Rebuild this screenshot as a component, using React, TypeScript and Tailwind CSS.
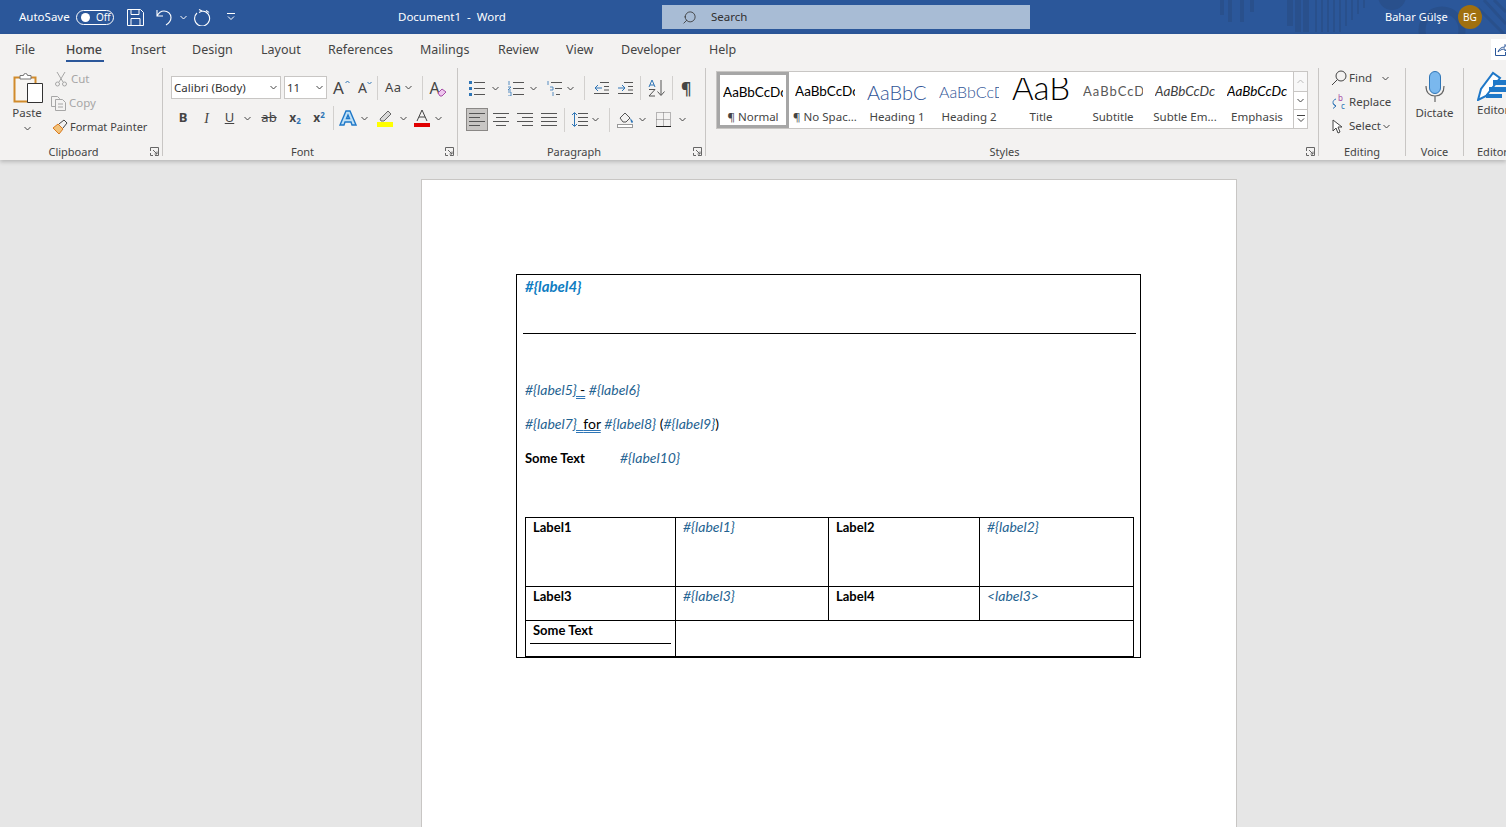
import React from "react";
import { Search } from "lucide-react";

const Chev = ({ className = "" }: { className?: string }) => (
  <svg width="7" height="5" viewBox="0 0 7 5" fill="none" stroke="#444" strokeWidth="1" className={className}>
    <path d="M.5 1l3 3 3-3" />
  </svg>
);

const Launcher = () => (
  <svg width="9" height="9" viewBox="0 0 9 9" fill="none" stroke="#666" strokeWidth="1" className="absolute right-[3px] bottom-0">
    <path d="M.5 4V.5h8v8H5M3 3l4 4M4.5 7H7V4.5M.5 6v2.5H3" />
  </svg>
);

const VSep = ({ className = "" }: { className?: string }) => <div className={`w-px h-[24px] bg-[#d2d0ce] ${className}`} />;

interface GroupProps {
  label: string;
  className: string;
  launcher?: boolean;
  children: React.ReactNode;
}

const Group = ({ label, className, launcher, children }: GroupProps) => (
  <div className={`relative shrink-0 h-full border-r border-[#c8c6c4] ${className}`}>
    {children}
    <div className={`absolute inset-x-0 bottom-[-4px] text-center text-[11px] leading-[16px] text-[#444] ${launcher ? "pr-[15px]" : ""}`}>{label}</div>
    {launcher && <Launcher />}
  </div>
);

const Lines = ({ ys, xs }: { ys: number[]; xs: number[][] }) => (
  <>
    {ys.map((y, i) => (
      <path key={y} d={`M${xs[i][0]} ${y}.5H${xs[i][1]}`} stroke="#555" strokeWidth="1" fill="none" />
    ))}
  </>
);

const styles = [
  { sample: "AaBbCcDc", name: "¶ No Spac...", cls: "text-[13.5px] text-black" },
  { sample: "AaBbCcDc", name: "Heading 1", cls: "text-[20px] text-[#2f5496] font-light" },
  { sample: "AaBbCcDc", name: "Heading 2", cls: "text-[16px] text-[#2f5496] font-light" },
  { sample: "AaB", name: "Title", cls: "", title: true },
  { sample: "AaBbCcDc", name: "Subtitle", cls: "text-[13px] text-[#595959] tracking-[1px]" },
  { sample: "AaBbCcDc", name: "Subtle Em...", cls: "text-[13.5px] text-[#404040] italic" },
  { sample: "AaBbCcDc", name: "Emphasis", cls: "text-[13.5px] text-black italic" },
];

const tabs = [
  { label: "File", cls: "w-[51px]" },
  { label: "Home", cls: "w-[65px]" },
  { label: "Insert", cls: "w-[61px]" },
  { label: "Design", cls: "w-[69px]" },
  { label: "Layout", cls: "w-[67px]" },
  { label: "References", cls: "w-[92px]" },
  { label: "Mailings", cls: "w-[78px]" },
  { label: "Review", cls: "w-[68px]" },
  { label: "View", cls: "w-[55px]" },
  { label: "Developer", cls: "w-[88px]" },
  { label: "Help", cls: "w-[40px]" },
];

const TitleBar = () => (
  <div className="relative h-[34px] bg-[#2b579a] text-white flex items-center text-[11.5px] overflow-hidden">
    <svg width="286" height="34" viewBox="0 0 286 34" fill="none" stroke="#29508c" className="absolute left-[1220px] top-0">
      <path strokeWidth="4" d="M2 0v15M10 0v22M22 0v22M32 0v12" />
      <path strokeWidth="6" d="M70 0v26M78 0v32M86 0v32" />
      <path strokeWidth="2" d="M96 0v32M102 0v32M108 0v32M114 0v32M120 0v32M126 0v26M132 0v20M138 0v14M144 0v8" />
      <circle cx="172" cy="-4" r="14" fill="#29508c" stroke="none" />
      <circle cx="222" cy="30" r="20" strokeWidth="7" />
      <path strokeWidth="3" d="M264 0l22 24M274 0l12 12M258 8l26 26" />
    </svg>
    <span className="relative ml-[19px] w-[57px]">AutoSave</span>
    <div className="relative w-[38px] h-[15px] rounded-full border border-white flex items-center">
      <div className="w-[9px] h-[9px] rounded-full bg-white ml-[4px]" />
      <span className="ml-[6px] text-[10px] leading-none">Off</span>
    </div>
    <svg width="17" height="17" viewBox="0 0 17 17" fill="none" stroke="white" strokeWidth="1" className="relative ml-[13px]">
      <path d="M.5.5h13l3 3v13H.5zM4 .5v5h8v-5M4 16.5v-7h9v7" />
    </svg>
    <svg width="16" height="17" viewBox="0 0 16 17" fill="none" stroke="white" strokeWidth="1.1" className="relative ml-[12px]">
      <path d="M1 1v6h6M1 7c2-4 4-5 7-5 4 0 7 3 7 6.5 0 3-2 5.5-5 7.5" />
    </svg>
    <Chev className="relative ml-[8px] [&_path]:stroke-white" />
    <svg width="18" height="18" viewBox="0 0 18 18" fill="none" stroke="white" strokeWidth="1.1" className="relative ml-[7px]">
      <path d="M5 1.500l3 1.500-3 1.500M8 3a7.500 7.500 0 1 1-5 2M12 2.500a7.500 7.500 0 0 1 3 2" />
    </svg>
    <svg width="8" height="8" viewBox="0 0 8 8" fill="none" stroke="white" strokeWidth="1" className="relative ml-[15px]">
      <path d="M0 .5h8M1 3.500l3 3 3-3" />
    </svg>
    <span className="relative ml-[163px] w-[264px]">Document1&nbsp; -&nbsp; Word</span>
    <div className="relative w-[368px] h-[24px] bg-[#a8bcd5] flex items-center text-[#323130]">
      <Search size={15} strokeWidth={1.3} className="ml-[20px] -scale-x-100 text-[#323130]" />
      <span className="ml-[14px]">Search</span>
    </div>
    <span className="relative ml-[355px] w-[73px] whitespace-nowrap text-[11px]">Bahar Gülşe</span>
    <div className="relative w-[24px] h-[24px] rounded-full bg-[#a0700f] flex items-center justify-center text-[10px]">BG</div>
  </div>
);

const TabRow = () => (
  <div className="relative h-[30px] flex items-center pl-[15px] text-[12.5px] text-[#444]">
    {tabs.map((t) => (
      <div key={t.label} className={`relative h-full flex items-center pt-[2px] shrink-0 ${t.cls} ${t.label === "Home" ? "font-medium" : ""}`}>
        {t.label}
        {t.label === "Home" && <div className="absolute left-0 bottom-[2px] w-[38px] h-[2px] bg-[#2b579a]" />}
      </div>
    ))}
    <div className="absolute left-[1491px] top-[5px] w-[15px] h-[21px] bg-white flex items-center pl-[4px] overflow-hidden">
      <svg width="14" height="12" viewBox="0 0 14 12" fill="none" stroke="#2b579a" strokeWidth="1" className="shrink-0">
        <path d="M.5 4v7.5h10V8M3 8c1-3 3-5 7-5V.5l3.5 3.5L10 7V5C7 5 5 6 3 8z" />
      </svg>
    </div>
  </div>
);

const Clipboard = () => (
  <Group label="Clipboard" className="w-[163px]" launcher>
    <div className="flex h-full">
      <div className="w-[54px] flex flex-col items-center shrink-0 pt-[4px]">
        <svg width="31" height="32" viewBox="0 0 31 32" fill="none" className="ml-[3px]">
          <path d="M1.500 5.500h21v24h-21z" stroke="#d18b2c" strokeWidth="2" fill="#f8f6f3" />
          <path d="M7 7V3.500h3.500a2 2 0 0 1 4 0H18V7z" stroke="#777" fill="#fff" />
          <path d="M14.500 11.500h15v19h-15z" stroke="#333" fill="#fff" />
        </svg>
        <span className="text-[11.5px] leading-[16px] mt-[1px] text-[#444]">Paste</span>
        <Chev className="mt-[5px]" />
      </div>
      <div className="flex flex-col text-[11.5px] leading-[16px] -mt-[1px]">
        <div className="flex items-center h-[24px] text-[#a6a6a6]">
          <svg width="12" height="15" viewBox="0 0 12 15" fill="none" stroke="#a6a6a6" className="ml-[1px]">
            <path d="M2 0l6 10M10 0L4 10" />
            <circle cx="2.500" cy="12" r="2" />
            <circle cx="9.500" cy="12" r="2" />
          </svg>
          <span className="ml-[3px] pl-[1px]">Cut</span>
        </div>
        <div className="flex items-center h-[24px] text-[#a6a6a6]">
          <svg width="16" height="15" viewBox="0 0 16 15" fill="none" stroke="#a6a6a6" className="-ml-[3px]">
            <path d="M.5.500h6l2 2v1M.5.500v10h4M4.500 3.500h7l3 3v8h-10zM7 8h5M7 11h5" />
          </svg>
          <span className="ml-[2px]">Copy</span>
        </div>
        <div className="flex items-center h-[24px] text-[#444]">
          <svg width="16" height="16" viewBox="0 0 16 16" fill="none" className="-ml-[2px]">
            <path d="M1 9l5-4 5 5-4 5z" fill="#f2c27a" stroke="#d97a1e" />
            <path d="M7 5l5-4 3 3-4 5" stroke="#444" />
          </svg>
          <span className="ml-[2px] whitespace-nowrap text-[11px]">Format Painter</span>
        </div>
      </div>
    </div>
  </Group>
);

const FontGroup = () => (
  <Group label="Font" className="w-[295px]" launcher>
    <div className="pl-[8px] pt-[8px]">
      <div className="flex items-center h-[23px]">
        <div className="w-[110px] h-[23px] bg-white border border-[#c8c6c4] flex items-center justify-between px-[2px] text-[11.5px] text-[#333]">
          Calibri (Body)
          <Chev className="mr-[1px]" />
        </div>
        <div className="w-[43px] h-[23px] ml-[3px] bg-white border border-[#c8c6c4] flex items-center justify-between px-[2px] text-[11.5px] text-[#333]">
          11
          <Chev className="mr-[1px]" />
        </div>
        <div className="relative ml-[6px] w-[18px] text-[17px] leading-none text-[#444]">
          A
          <svg width="5" height="4" viewBox="0 0 5 4" fill="none" stroke="#2e75b6" className="absolute left-[12px] top-[1px]"><path d="M.5 3L2.500 1l2 2" /></svg>
        </div>
        <div className="relative ml-[7px] w-[18px] text-[14px] leading-none text-[#444]">
          A
          <svg width="5" height="4" viewBox="0 0 5 4" fill="none" stroke="#2e75b6" className="absolute left-[9px] top-[0px]"><path d="M.5 1l2 2 2-2" /></svg>
        </div>
        <VSep className="ml-[1px]" />
        <span className="ml-[7px] text-[13px] text-[#444] tracking-[.5px]">Aa</span>
        <Chev className="ml-[3px]" />
        <VSep className="ml-[10px]" />
        <div className="relative ml-[7px] w-[17px] text-[16px] leading-none text-[#444]">
          A
          <svg width="10" height="9" viewBox="0 0 10 9" fill="#eec6ee" stroke="#a64ca6" className="absolute left-[7px] top-[8px]"><path d="M1 5l4-4 4 3-4 4H3z" /></svg>
        </div>
      </div>
      <div className="flex items-center h-[24px] mt-[7px] text-[#444]">
        <div className="w-[24px] text-center text-[13px] font-bold">B</div>
        <div className="w-[23px] text-center text-[14px] italic font-['Liberation_Serif',serif]">I</div>
        <div className="w-[23px] text-center text-[13px] underline">U</div>
        <Chev className="ml-[3px] mr-[4px]" />
        <div className="w-[28px] text-center text-[13px] line-through">ab</div>
        <div className="w-[24px] text-center text-[12px] font-bold">x<sub className="text-[8px] text-[#2e75b6]">2</sub></div>
        <div className="w-[24px] text-center text-[12px] font-bold">x<sup className="text-[8px] text-[#2e75b6]">2</sup></div>
        <VSep className="ml-[2px]" />
        <svg width="18" height="18" viewBox="0 0 18 18" className="ml-[5px]" fill="#bfe0f6" stroke="#1f78c8" strokeWidth="1.400"><path d="M1 16L7 2h4l6 14h-4l-1-3H6l-1 3zM7.500 9.500L9 6l1.500 3.500z" /></svg>
        <Chev className="ml-[4px]" />
        <svg width="18" height="18" viewBox="0 0 18 18" fill="none" className="ml-[9px]">
          <rect x="0" y="13" width="16" height="5" fill="#ffff00" />
          <path d="M3 10l8-8 3 3-7 7H4z" stroke="#666" fill="#d8d8d8" />
        </svg>
        <Chev className="ml-[5px]" />
        <svg width="16" height="18" viewBox="0 0 16 18" fill="none" className="ml-[7px]">
          <path d="M3 12L8 1l5 11M5 8h6" stroke="#444" />
          <rect x="0" y="14" width="16" height="4" fill="#e00000" />
        </svg>
        <Chev className="ml-[5px]" />
      </div>
    </div>
  </Group>
);

const ParagraphGroup = () => (
  <Group label="Paragraph" className="w-[248px]" launcher>
    <div className="pl-[9px] pt-[9px]">
      <div className="flex items-center h-[22px]">
        <svg width="16" height="15" viewBox="0 0 16 15" fill="none" className="ml-[2px]">
          <path d="M0 0h3v3H0zM0 6h3v3H0zM0 12h3v3H0z" fill="#2e75b6" />
          <path d="M5 1.500h11M5 7.500h11M5 13.500h11" stroke="#555" />
        </svg>
        <Chev className="ml-[7px]" />
        <svg width="16" height="15" viewBox="0 0 16 15" fill="none" className="ml-[9px]">
          <path d="M1 0v4M0 6h3L0 9h3M0 11h3v4H0" stroke="#2e75b6" strokeWidth=".8" />
          <path d="M5 1.500h11M5 7.500h11M5 13.500h11" stroke="#555" />
        </svg>
        <Chev className="ml-[6px]" />
        <svg width="15" height="15" viewBox="0 0 15 15" fill="none" className="ml-[10px]">
          <path d="M1 0v4M3 6h3v3H3M6 11v4" stroke="#2e75b6" strokeWidth=".8" />
          <path d="M4 1.500h11M8 7.500h7M9 13.500h4" stroke="#555" />
        </svg>
        <Chev className="ml-[5px]" />
        <VSep className="ml-[10px]" />
        <svg width="15" height="12" viewBox="0 0 15 12" fill="none" className="ml-[9px]">
          <path d="M6 .5h9M10 4.500h5M10 8h5M0 11.500h15" stroke="#555" />
          <path d="M8 6H1M4 3L1 6l3 3" stroke="#2e75b6" />
        </svg>
        <svg width="15" height="12" viewBox="0 0 15 12" fill="none" className="ml-[9px]">
          <path d="M6 .5h9M10 4.500h5M10 8h5M0 11.500h15" stroke="#555" />
          <path d="M0 6h7M4 3l3 3-3 3" stroke="#2e75b6" />
        </svg>
        <VSep className="ml-[7px]" />
        <div className="ml-[7px] w-[18px] h-[18px] relative">
          <svg width="18" height="18" viewBox="0 0 18 18" fill="none">
            <path d="M13 1v15M9.500 12.500l3.500 4 3.500-4" stroke="#555" />
            <path d="M1 8L4 1l3 7M2 6h4" stroke="#2e75b6" />
            <path d="M1 10.500h6L1 17h6" stroke="#555" />
          </svg>
        </div>
        <VSep className="ml-[6px]" />
        <span className="ml-[8px] text-[16px] font-bold text-[#444] leading-none">¶</span>
      </div>
      <div className="flex items-center h-[23px] mt-[9px] -ml-[1px]">
        <div className="w-[22px] h-[23px] bg-[#c8c6c4] border border-[#8a8886] flex items-center justify-center">
          <svg width="16" height="13" viewBox="0 0 16 13" fill="none"><Lines xs={[[0, 16], [0, 11], [0, 16], [0, 11]]} ys={[0, 4, 8, 12]} /></svg>
        </div>
        <svg width="16" height="13" viewBox="0 0 16 13" fill="none" className="ml-[5px]"><Lines xs={[[0, 16], [3, 13], [0, 16], [3, 13]]} ys={[0, 4, 8, 12]} /></svg>
        <svg width="16" height="13" viewBox="0 0 16 13" fill="none" className="ml-[8px]"><Lines xs={[[0, 16], [5, 16], [0, 16], [5, 16]]} ys={[0, 4, 8, 12]} /></svg>
        <svg width="16" height="13" viewBox="0 0 16 13" fill="none" className="ml-[8px]"><Lines xs={[[0, 16], [0, 16], [0, 16], [0, 16]]} ys={[0, 4, 8, 12]} /></svg>
        <VSep className="ml-[7px]" />
        <svg width="16" height="15" viewBox="0 0 16 15" fill="none" className="ml-[7px]">
          <path d="M6 1.500h10M6 5.500h10M6 9.500h10M6 13.500h10" stroke="#555" />
          <path d="M2.500 1v13M0 3l2.500-2.500L5 3M0 12l2.500 2.500L5 12" stroke="#2e75b6" />
        </svg>
        <Chev className="ml-[4px]" />
        <VSep className="ml-[10px]" />
        <svg width="17" height="17" viewBox="0 0 17 17" fill="none" className="ml-[7px]">
          <path d="M3 7l5-5 5 5-4 4H6z" stroke="#555" />
          <path d="M13 7c1 1 3 3 3 4s-2 1-2 0z" fill="#2e75b6" />
          <rect x=".5" y="13.500" width="15" height="3" fill="#fff" stroke="#999" />
        </svg>
        <Chev className="ml-[5px]" />
        <svg width="15" height="15" viewBox="0 0 15 15" fill="none" className="ml-[10px]">
          <path d="M.5.500h14v14H.5zM7.500.5v14M.5 7.500h14" stroke="#777" strokeDasharray="1 1" />
          <path d="M0 14.500h15" stroke="#222" />
        </svg>
        <Chev className="ml-[8px]" />
      </div>
    </div>
  </Group>
);

const StyleItem = ({ sample, name, cls, title }: { sample: string; name: string; cls: string; title?: boolean }) => (
  <div className="w-[72px] h-full shrink-0 flex flex-col items-center overflow-hidden">
    {title ? (
      <div className="h-[37px] pt-[6px] w-[60px] flex justify-center">
        <div className="h-[23px] overflow-hidden text-[33px] leading-[19px] font-light text-black">{sample}</div>
      </div>
    ) : (
      <div className={`h-[37px] pt-[2px] w-[60px] flex items-center whitespace-nowrap overflow-hidden ${cls}`}>{sample}</div>
    )}
    <div className="font-['Noto_Sans',sans-serif] text-[11.5px] leading-[16px] text-[#444] whitespace-nowrap">{name}</div>
  </div>
);

const StylesGroup = () => (
  <Group label="Styles" className="w-[613px]" launcher>
    <div className="ml-[10px] mt-[3px] w-[592px] h-[58px] bg-white border border-[#c8c6c4] flex font-['Lato',sans-serif]">
      <div className="w-[72px] h-full shrink-0 border-[3px] border-[#a6a6a6] flex flex-col items-center">
        <div className="h-[34px] pt-[1px] w-[60px] flex items-center whitespace-nowrap overflow-hidden text-[13.5px] text-black">AaBbCcDc</div>
        <div className="font-['Noto_Sans',sans-serif] text-[11.5px] leading-[16px] text-[#444]">¶ Normal</div>
      </div>
      {styles.map((s) => (
        <StyleItem key={s.name} {...s} />
      ))}
      <div className="ml-auto w-[15px] h-full flex flex-col border-l border-[#c8c6c4]">
        <div className="h-[19px] flex items-center justify-center bg-[#f8f8f8]">
          <Chev className="rotate-180 [&_path]:stroke-[#bbb]" />
        </div>
        <div className="h-[19px] flex items-center justify-center border-y border-[#c8c6c4] bg-white">
          <Chev />
        </div>
        <div className="flex-1 flex items-center justify-center bg-white">
          <svg width="8" height="8" viewBox="0 0 8 8" fill="none" stroke="#444"><path d="M0 .5h8M1 3.500l3 3 3-3" /></svg>
        </div>
      </div>
    </div>
  </Group>
);

const EditingGroup = () => (
  <Group label="Editing" className="w-[87px]">
    <div className="pl-[12px] -mt-[2px] text-[11.5px] text-[#444] flex flex-col">
      <div className="flex items-center h-[24px]">
        <svg width="16" height="16" viewBox="0 0 16 16" fill="none" stroke="#444">
          <circle cx="10" cy="6" r="5" />
          <path d="M6.500 9.500L1 15" />
        </svg>
        <span className="ml-[2px]">Find</span>
        <Chev className="ml-[10px]" />
      </div>
      <div className="flex items-center h-[24px]">
        <svg width="16" height="16" viewBox="0 0 16 16" fill="none">
          <path d="M5 5C1 6 1 11 5 12M2 9.500l3 2.500-3 2.500" stroke="#2e75b6" />
          <text x="7" y="7" fontSize="8" fill="#a64ca6" fontFamily="Noto Sans">b</text>
          <text x="10" y="15" fontSize="8" fill="#2e75b6" fontFamily="Noto Sans">c</text>
        </svg>
        <span className="ml-[2px]">Replace</span>
      </div>
      <div className="flex items-center h-[24px]">
        <svg width="14" height="15" viewBox="0 0 14 15" fill="#fff" stroke="#444">
          <path d="M2 1v11l3-3 2 5 2-1-2-5h4z" />
        </svg>
        <span className="ml-[4px]">Select</span>
        <Chev className="ml-[2px]" />
      </div>
    </div>
  </Group>
);

const VoiceGroup = () => (
  <Group label="Voice" className="w-[58px]">
    <div className="flex flex-col items-center pt-[3px]">
      <svg width="20" height="32" viewBox="0 0 20 32" fill="none">
        <rect x="4.500" y=".5" width="11" height="22" rx="5.500" fill="#7ab8ee" stroke="#2e75b6" />
        <path d="M1 15c0 7 4 10 9 10s9-3 9-10M10 25v6" stroke="#666" strokeWidth="1.200" />
      </svg>
      <span className="text-[11.5px] leading-[16px] text-[#444] mt-[2px]">Dictate</span>
    </div>
  </Group>
);

const EditorGroup = () => (
  <div className="relative shrink-0 w-[60px] h-full pl-[13px] pt-[3px]">
    <svg width="32" height="30" viewBox="0 0 32 30" fill="none">
      <path d="M1 29l3-11L16 2l7 5L9 25z" stroke="#1f78c8" strokeWidth="2" fill="#fff" />
      <path d="M16 9h16v5H16zM12 16h20v5H12zM9 23h16v4H9z" fill="#1f78c8" />
    </svg>
    <span className="block text-[11.5px] leading-[16px] text-[#444] mt-[1px]">Editor</span>
    <div className="absolute left-[13px] bottom-[-4px] text-[11px] leading-[16px] text-[#444]">Editor</div>
  </div>
);

const Ribbon = () => (
  <div className="relative z-10 bg-[#f3f2f1] shadow-[0_2px_4px_rgba(0,0,0,.2)] overflow-hidden">
    <TabRow />
    <div className="flex h-[96px] py-[4px]">
      <Clipboard />
      <FontGroup />
      <ParagraphGroup />
      <StylesGroup />
      <EditingGroup />
      <VoiceGroup />
      <EditorGroup />
    </div>
  </div>
);

const Link = ({ children, className = "" }: { children: React.ReactNode; className?: string }) => (
  <span className={`italic text-[#1f6391] ${className}`}>{children}</span>
);

const Dbl = ({ children }: { children: React.ReactNode }) => (
  <span className="underline decoration-double decoration-[#2e75b6]">{children}</span>
);

const Cell = ({ className, children }: { className: string; children: React.ReactNode }) => (
  <div className={`border-black pl-[7px] leading-[18px] ${className}`}>{children}</div>
);

const Doc = () => (
  <div className="flex-1 min-h-0 pl-[421px] pt-[19px] bg-[#e6e6e6] overflow-hidden">
    <div className="w-[816px] h-[700px] bg-white border border-[#c8c6c4] pt-[94px] pl-[94px] font-['Lato','Liberation_Sans',sans-serif] text-[14px] text-black">
      <div className="w-[625px] h-[384px] border border-black pl-[8px]">
        <div className="pt-[2px] leading-[18px] text-[15px] font-bold italic text-[#0f7dc2]">{"#{label4}"}</div>
        <div className="mt-[38px] h-px w-[613px] -ml-[2px] bg-black" />
        <div className="mt-[47px] leading-[18px]">
          <Link>{"#{label5"}<Dbl>{"}\u00a0"}</Dbl></Link>
          <Dbl>-</Dbl> <Link>{"#{label6}"}</Link>
        </div>
        <div className="mt-[16px] leading-[18px]">
          <Link>{"#{label7"}<Dbl>{"}\u00a0\u00a0"}</Dbl></Link>
          <Dbl>for</Dbl> <Link>{"#{label8}"}</Link> (<Link>{"#{label9}"}</Link>)
        </div>
        <div className="mt-[16px] leading-[18px] flex">
          <span className="w-[95px] font-bold text-[13px]">Some Text</span>
          <Link>{"#{label10}"}</Link>
        </div>
        <div className="mt-[50px] w-[609px] border border-black border-b-2 grid grid-cols-[150px_153px_151px_153px] grid-rows-[69px_34px_35px]">
          <Cell className="border-r border-b font-bold text-[13px]">Label1</Cell>
          <Cell className="border-r border-b"><Link>{"#{label1}"}</Link></Cell>
          <Cell className="border-r border-b font-bold text-[13px]">Label2</Cell>
          <Cell className="border-b"><Link>{"#{label2}"}</Link></Cell>
          <Cell className="border-r border-b font-bold text-[13px]">Label3</Cell>
          <Cell className="border-r border-b"><Link>{"#{label3}"}</Link></Cell>
          <Cell className="border-r border-b font-bold text-[13px]">Label4</Cell>
          <Cell className="border-b"><Link>{"<label3>"}</Link></Cell>
          <Cell className="border-r !pl-[4px] font-bold text-[13px]">
            <div className="pl-[3px]">Some Text</div>
            <div className="mt-[4px] h-px w-[141px] bg-black" />
          </Cell>
          <div className="col-span-3" />
        </div>
      </div>
    </div>
  </div>
);

export default function App() {
  return (
    <div className="w-[1506px] h-[827px] flex flex-col overflow-hidden bg-[#e6e6e6] font-['Noto_Sans','Liberation_Sans',sans-serif]">
      <TitleBar />
      <Ribbon />
      <Doc />
    </div>
  );
}
